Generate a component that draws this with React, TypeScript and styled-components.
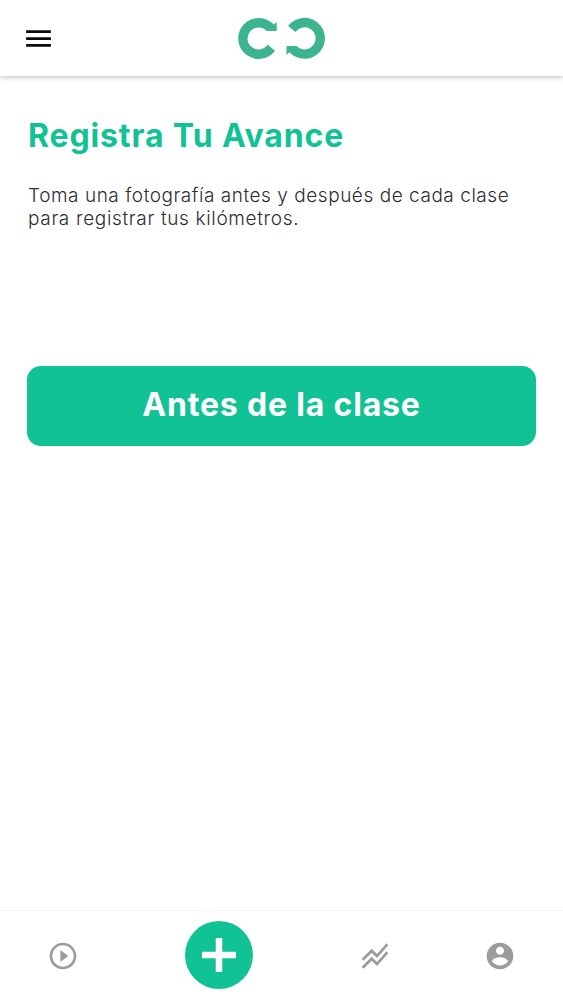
import React from "react";
import styled, { createGlobalStyle } from "styled-components";

const green = "#10c294";

const GlobalStyle = createGlobalStyle`
  * { box-sizing: border-box; }
  body { margin: 0; background: #fff; font-family: Inter, "Liberation Sans", sans-serif; }
`;

const Screen = styled.div`
  display: flex;
  flex-direction: column;
  height: 100vh;
  background: #fff;
`;

const Header = styled.header`
  display: grid;
  grid-template-columns: 1fr auto 1fr;
  align-items: center;
  height: 76px;
  padding: 0 22px;
  background: #fff;
  box-shadow: 0 1px 5px rgba(0, 0, 0, 0.28);
`;

const IconButton = styled.button`
  display: flex;
  justify-self: start;
  padding: 0;
  border: 0;
  background: none;
  color: #0a0a0a;
`;

const Logo = styled.svg`
  display: block;
  width: 88px;
  height: 42px;
  color: #3cb48d;
`;

const Main = styled.main`
  flex: 1;
  padding: 40px 27px 0 28px;
`;

const Title = styled.h1`
  margin: 0;
  color: ${green};
  font-size: 32px;
  line-height: 40px;
  font-weight: 700;
  letter-spacing: 0.87px;
  white-space: nowrap;
`;

const Intro = styled.p`
  margin: 28px 0 0;
  color: #2e2e33;
  font-size: 19px;
  line-height: 23px;
  font-weight: 300;
  white-space: nowrap;
`;

const IntroLine = styled.span<{ $tracking: number }>`
  display: block;
  letter-spacing: ${(p) => p.$tracking}px;
`;

const PrimaryButton = styled.button`
  display: flex;
  align-items: center;
  justify-content: center;
  width: 509px;
  height: 80px;
  margin: 135.5px 0 0 -1px;
  padding: 0 0 2px;
  border: 0;
  border-radius: 14px;
  background: ${green};
  color: #fff;
  font: inherit;
  font-size: 32px;
  font-weight: 700;
  letter-spacing: 0.82px;
`;

const TabBar = styled.nav`
  display: grid;
  grid-template-columns: 125px 187px 126px 124px;
  align-items: center;
  height: 90px;
  border-top: 1px solid #f6f6f6;
`;

const Tab = styled.button`
  display: flex;
  justify-content: center;
  padding: 0;
  border: 0;
  background: none;
  color: #9c9b9f;
`;

const AddButton = styled.button`
  display: flex;
  align-items: center;
  justify-content: center;
  justify-self: center;
  width: 68px;
  height: 68px;
  margin-top: -1px;
  padding: 0;
  border: 0;
  border-radius: 50%;
  background: ${green};
  color: #fff;
`;

const Icon = ({ d, size = 32 }: { d: string; size?: number }) => (
  <svg width={size} height={size} viewBox="0 0 24 24" fill="currentColor">
    <path d={d} />
  </svg>
);

const icons = {
  menu: "M3 18h18v-2H3v2zm0-5h18v-2H3v2zm0-7v2h18V6H3z",
  play: "M10 16.5l6-4.5-6-4.5v9zM12 2C6.48 2 2 6.48 2 12s4.48 10 10 10 10-4.48 10-10S17.52 2 12 2zm0 18c-4.41 0-8-3.59-8-8s3.59-8 8-8 8 3.59 8 8-3.59 8-8 8z",
  chart:
    "M2 19.99l7.5-7.51 4 4 7.09-7.97L22 9.92l-8.5 9.56-4-4-6 6.01L2 19.99zM3.5 15.49l6-6.01 4 4L22 3.92l-1.41-1.41-7.09 7.97-4-4L2 13.99l1.5 1.5z",
  account:
    "M12 2C6.48 2 2 6.48 2 12s4.48 10 10 10 10-4.48 10-10S17.52 2 12 2zm0 3c1.66 0 3 1.34 3 3s-1.34 3-3 3-3-1.34-3-3 1.34-3 3-3zm0 14.2c-2.5 0-4.71-1.28-6-3.22.03-1.99 4-3.08 6-3.08 1.99 0 5.97 1.09 6 3.08-1.29 1.94-3.5 3.22-6 3.22z",
};

const arc =
  "M39.1 4.5V13.5H29.8L29 13.5A11 11 0 1 0 30 27.3L37.5 33.4A20.5 20.5 0 1 1 36.2 7.2Z";

export default function App() {
  return (
    <Screen>
      <GlobalStyle />
      <Header>
        <IconButton aria-label="Menú">
          <Icon d={icons.menu} size={33} />
        </IconButton>
        <Logo viewBox="0.4 -0.4 88 42" fill="currentColor">
          <path d={arc} />
          <path d={arc} transform="rotate(180 44 21)" />
        </Logo>
      </Header>
      <Main>
        <Title>Registra Tu Avance</Title>
        <Intro>
          <IntroLine $tracking={0.54}>
            Toma una fotografía antes y después de cada clase
          </IntroLine>
          <IntroLine $tracking={0.66}>para registrar tus kilómetros.</IntroLine>
        </Intro>
        <PrimaryButton>Antes de la clase</PrimaryButton>
      </Main>
      <TabBar>
        <Tab aria-label="Clases">
          <Icon d={icons.play} />
        </Tab>
        <AddButton aria-label="Agregar">
          <svg width="34" height="34" viewBox="0 0 34 34" fill="currentColor">
            <path d="M13.75 0h6.5v13.75H34v6.5H20.25V34h-6.5V20.25H0v-6.5h13.75z" />
          </svg>
        </AddButton>
        <Tab aria-label="Progreso">
          <Icon d={icons.chart} />
        </Tab>
        <Tab aria-label="Perfil">
          <Icon d={icons.account} />
        </Tab>
      </TabBar>
    </Screen>
  );
}
